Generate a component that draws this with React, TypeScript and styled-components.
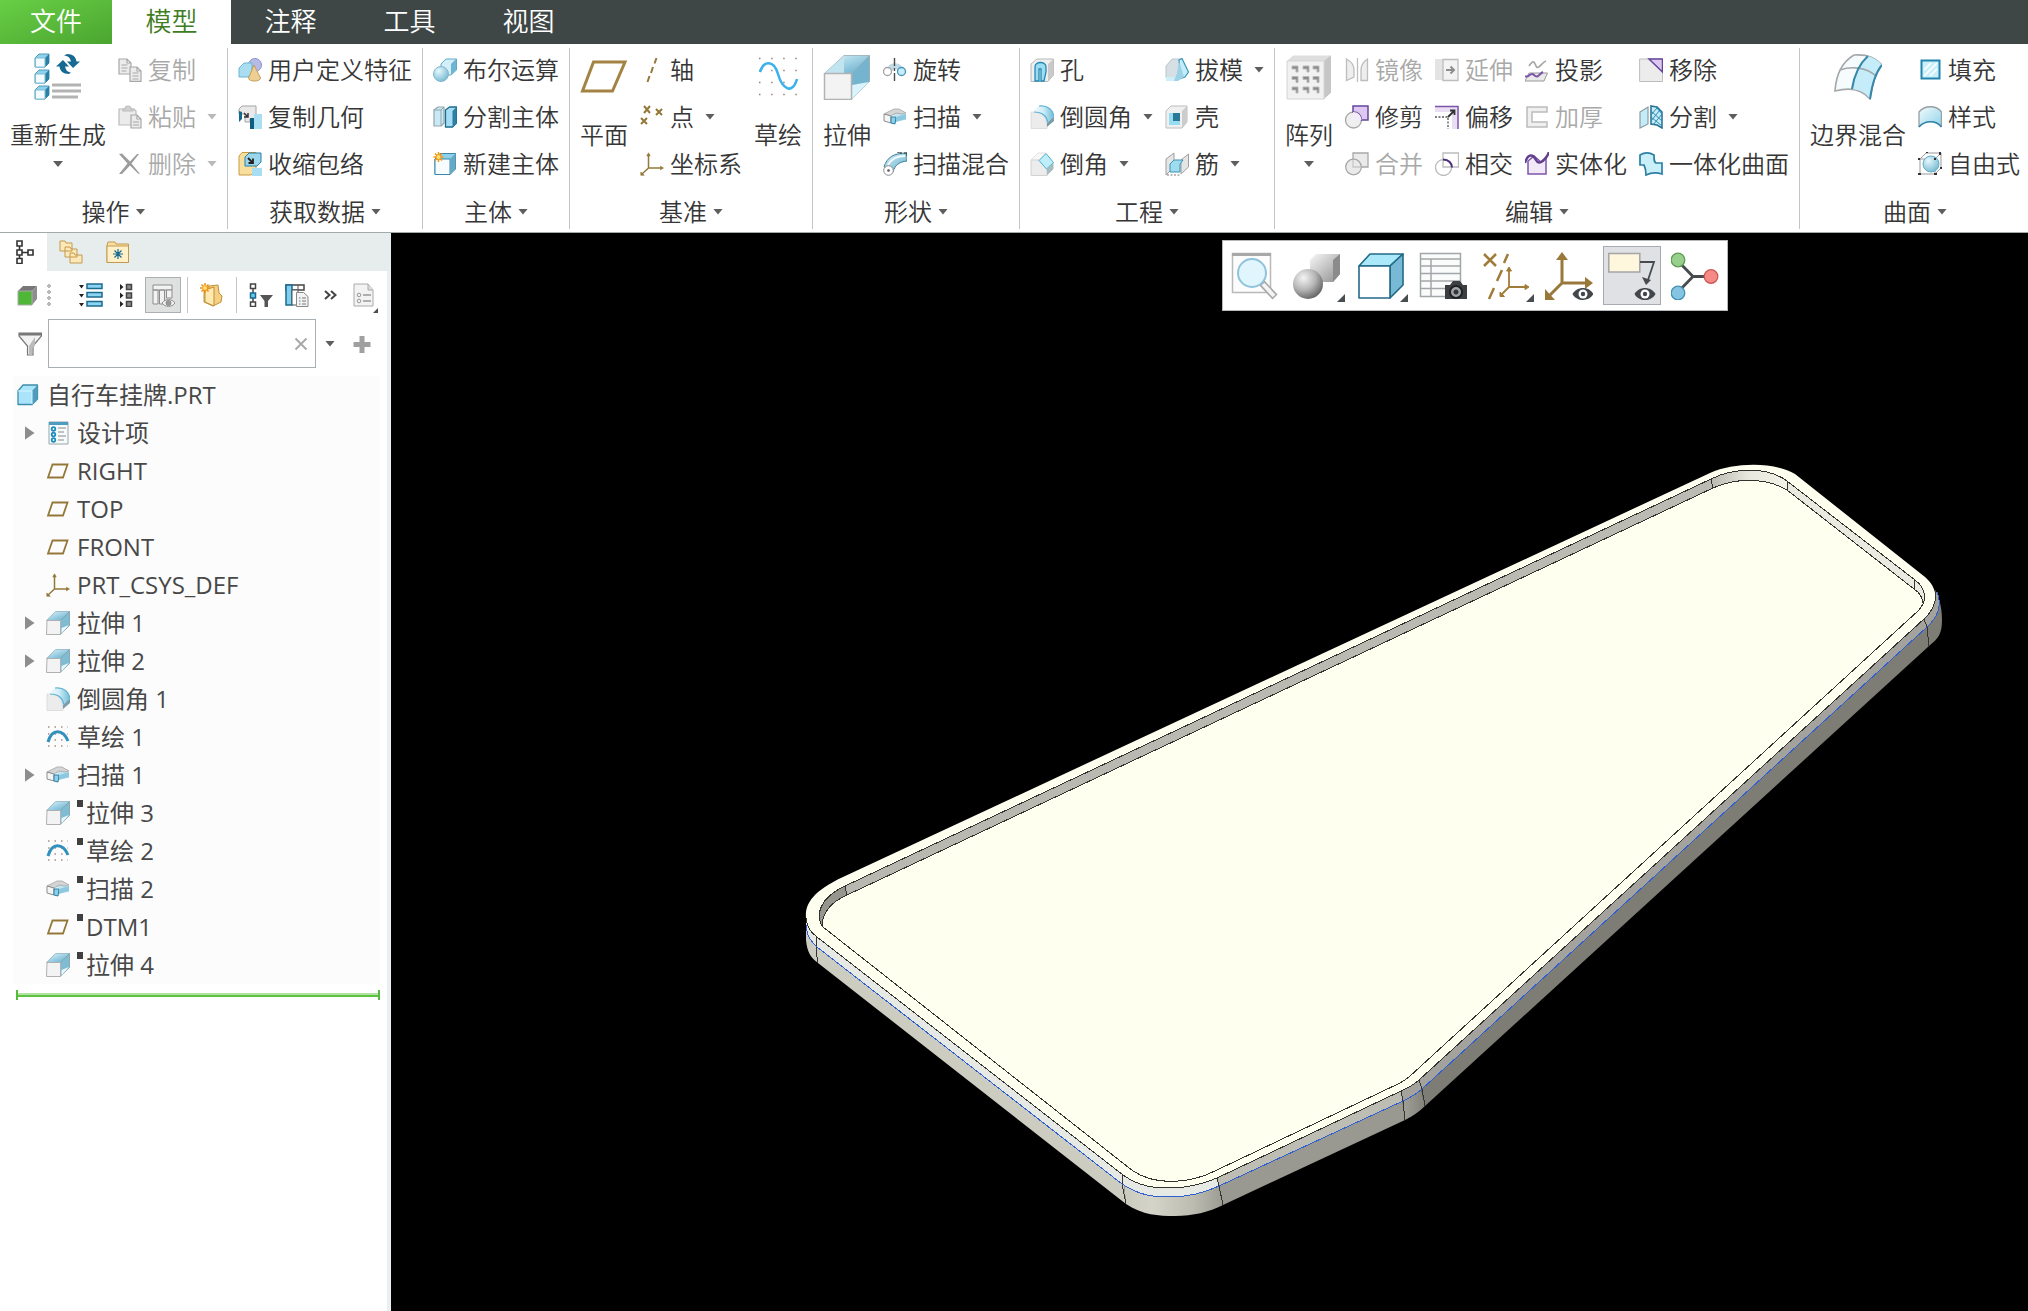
import React from "react";
import styled, { createGlobalStyle } from "styled-components";

const GlobalStyle = createGlobalStyle`
  *, *::before, *::after { box-sizing: border-box; }
  body {
    margin: 0;
    background: #000;
    color: #363636;
    font-family: "Open Sans", "Noto Sans CJK SC", sans-serif;
    font-size: 24px;
    font-weight: 350;
    line-height: 34px;
  }
  button, input {
    margin: 0;
    padding: 0;
    border: 0;
    background: transparent;
    color: inherit;
    font: inherit;
  }
  svg { display: block; flex: none; }
`;

/* ---------- palette ---------- */
const SKY = "#a9def2";
const TEAL = "#2a7fa3";
const GOLD = "#94783a";
const PURPLE = "#7d55a8";
const GREY = "#a8a8a8";

/* ---------- icons, 24 unit grid ---------- */
const extrude = (
  <g strokeLinejoin="round">
    <path d="M.5 9.500 9.500.5H23.500l-9 9z" fill="url(#blueDeep)" stroke="#8fb3c2" strokeWidth=".8" />
    <path d="M14.500 9.500l9-9v14l-9 9z" fill="#7fbbd3" stroke="#7f9ca8" strokeWidth=".8" />
    <path d="M15.500 17l7.500-3-7.500 8.500z" fill="#e8f8fd" />
    <path d="M1 9.500h13.500v14H.5z" fill="#f3f3f3" stroke="#b0b0b0" strokeWidth="1" />
  </g>
);
const csys = (
  <g stroke={GOLD} fill={GOLD} strokeWidth="1.500">
    <path d="M8.500 2v14H22M8.500 16 2 22" fill="none" />
    <path d="M6.800 4 8.500.8 10.200 4zM20.500 14.200l3 1.800-3 1.800zM.8 20v3.300h3.500z" strokeWidth=".6" />
  </g>
);
const round = (
  <g>
    <path d="M1 7h4C12 7 17 13 17 23.500H1z" fill="#ececec" stroke="#d8d8d8" strokeWidth=".8" />
    <path d="M9 1C18 0 23 5 24 13l-7 8C17 12 12 7 2 7z" fill="url(#band)" />
    <path d="M17 18l7-6v4l-7 6z" fill="#7e9ca8" />
    <path d="M9 1C18 0 23 5 24 12M4 7c8 0 13 4 13.500 10" fill="none" stroke="#5fb2d0" strokeWidth="1.200" />
  </g>
);
const sweep = (
  <g strokeLinejoin="round">
    <path d="M1 9 12 4l11 5v6l-9 1-1-5z" fill="#c2e4f0" />
    <path d="M1 9 11 4h5l7 4-4 1-6-1-5 3z" fill="#d5d5d5" stroke="#a5a5a5" strokeWidth=".8" />
    <path d="M1 9l7 2v7l-7-2z" fill="#f5f5f5" stroke="#8d8d8d" />
    <path d="M8 12h5l-1 7-4-1z" fill="#8fd0ea" stroke={TEAL} />
    <path d="M13 12l10-3v5l-10 3z" fill="#8cc9e0" />
  </g>
);

const ICONS: Record<string, React.ReactNode> = {
  extrude,
  csys,
  round,
  sweep,
  planeRow: <path d="M6.500 5.500h15L17 18.500H2z" fill="none" stroke={GOLD} strokeWidth="1.800" />,
  copy: (
    <g fill="#ececec" stroke={GREY} strokeWidth="1.200">
      <path d="M1 1h8l4 4v11H1zM9 1v4h4M3.500 7h6M3.500 10h6M3.500 13h5" />
      <path d="M12 9h7l4 4v10.400H12zM19 9v4h4M14.500 15h6M14.500 18h6M14.500 21h6" />
    </g>
  ),
  paste: (
    <g fill="#ebebeb" stroke="#bcbcbc" strokeWidth="1.200">
      <path d="M1 4h15l2 2v14H1z" />
      <path d="M5 6V4h2c0-4 6-4 6 0h2v2z" fill="#d0d0d0" />
      <path d="M13 10h6l4 4v9H13zM19 10v4h4M15 17h6M15 20h6" stroke={GREY} />
    </g>
  ),
  remove: <path d="M1 2l3-.5 8 8L19 2h2l-7.500 9.500L22 22l-2-.5-8-8L4 22H1l8.500-10.500z" fill="#9c9c9c" />,
  udf: (
    <g>
      <circle cx="17" cy="7" r="6.500" fill="#b6bbe6" stroke="#8d92c8" />
      <path d="M1 10l5-5h8v10l-4 4H1z" fill={SKY} stroke="#6db5d3" />
      <path d="M16 7l6.500 13c0 4-12 4-12 0z" fill="#edcf94" stroke="#c49c58" />
    </g>
  ),
  copyGeom: (
    <g>
      <path d="M1 4l3-3h14v13h-6v3H7V9H1z" fill="#e9e9e9" stroke="#a5a5a5" />
      <path d="M1 6v11l3-3V7z" fill="#156a8c" />
      <path d="M6 8l4 4m0-4v4H6" stroke="#333" strokeWidth="1.500" fill="none" />
      <path d="M12 13h4v11h-4z" fill="#0e5d80" />
      <path d="M16 9h8v15h-8z" fill={SKY} />
    </g>
  ),
  shrink: (
    <g>
      <path d="M1 4l3-3.500h14V18l-5 5H1z" fill="#f8df9d" stroke="#c99c44" />
      <path d="M7 5l4-4h12v9l-4 4H7z" fill="#9bd6ed" stroke={TEAL} />
      <path d="M10 6l5 5m0-4.500V11h-4.500" stroke="#222" strokeWidth="1.800" fill="none" />
      <path d="M14 16h10v8H14z" fill={SKY} />
    </g>
  ),
  boolean: (
    <g>
      <path d="M8 6l5-5h10.500v11L18 17H8z" fill="#d2effa" stroke="#5ea9c7" />
      <path d="M18 6l5-5v11l-5 5z" fill="#6db5d2" />
      <circle cx="8" cy="16" r="7.500" fill="url(#ball)" stroke="#83b7ca" />
    </g>
  ),
  splitBody: (
    <g strokeLinejoin="round">
      <path d="M1 5l4-3h6v16l-3 3H1z" fill="#c9eaf4" stroke="#93a5ac" strokeWidth="1.200" />
      <path d="M8 5v16M8 5l3-3M1 5h7" stroke="#93a5ac" />
      <path d="M12.500 5l4-3h7v16l-4 4h-7z" fill="#a5def4" stroke="#1d6b8d" strokeWidth="1.300" />
      <path d="M19.500 6l4-4v16l-4 4z" fill="#2d7fa3" />
    </g>
  ),
  newBody: (
    <g strokeLinejoin="round">
      <path d="M2 7l5-5.500h15.500V17L17 22.500H2z" fill="#8fd0ea" stroke="#3988aa" />
      <path d="M2 7h15v15.500H2z" fill="#f7fcfe" stroke="#3988aa" />
      <path d="M17 7l5.500-5.500V17L17 22.500z" fill="#66a9c5" />
      <path d="M5.500 0v10M.5 5h10M2 1.500l7 7M9 1.500l-7 7" stroke="#f09a1a" strokeWidth="1.500" />
      <circle cx="5.500" cy="5" r="2.500" fill="#ffe06a" stroke="#f09a1a" />
    </g>
  ),
  axis: <path d="M16.500 0l-2 5.500M13 9l-2 6M9.500 18l-2 6" stroke={GOLD} strokeWidth="2" />,
  points: (
    <path d="M4 1l6 7M10 1 4 8M16 4l6 6M22 4l-6 6M1 13l6 6M7 13l-6 6" stroke={GOLD} strokeWidth="2" />
  ),
  revolve: (
    <g>
      <path d="M5 9c2-5 12-5 14 0l-3 5-4-4-4 4z" fill="#c0dae5" />
      <circle cx="4.500" cy="13.500" r="4" fill="#fff" stroke="#a4a4a4" strokeWidth="1.300" />
      <circle cx="18.500" cy="13.500" r="4" fill="#c5edfa" stroke="#4696b7" strokeWidth="1.300" />
      <path d="M11.500 0v24" stroke="#4a4a4a" strokeWidth="1.400" strokeDasharray="8 2 3 2" />
    </g>
  ),
  sweepBlend: (
    <g>
      <path d="M1 15C4 5 11 1 24 1v8c-8 1-12 4-14 11z" fill="url(#blueDeep)" stroke="#3f809b" />
      <path d="M5 13C8 7 13 4 22 4" stroke="#f4fcff" strokeWidth="2" fill="none" />
      <circle cx="5.500" cy="18.500" r="4.800" fill="#fff" stroke="#8d8d8d" />
      <circle cx="5.500" cy="18.500" r="1.300" fill="#555" />
      <path d="M15 1V0h3v2M21 1h3v3" stroke="#333" fill="none" />
    </g>
  ),
  hole: (
    <g>
      <path d="M1 6l6-5h16.500v16L18 23.500H1z" fill="#efefef" stroke="#b8b8b8" />
      <path d="M18 6l5.500-5v16L18 23.500z" fill="#c9c9c9" />
      <path d="M5 23V9c0-6 11-6 11 0v5l-2 9h-3V11H9v12z" fill="#9ddcf2" stroke="#248ab2" strokeWidth="1.300" />
    </g>
  ),
  chamfer: (
    <g>
      <path d="M1 8l7-7h8L9 9z" fill="#f8f8f8" stroke="#dcdcdc" strokeWidth=".8" />
      <path d="M1 8h8l8 9v6.500H1z" fill="#ececec" stroke="#d2d2d2" />
      <path d="M17 17l6.500-6v6L17 23.500z" fill="#a9bac1" />
      <path d="M16 1.500l7.500 9-7 6.500-7.500-8.500z" fill="#bfeefb" stroke="#54adc9" />
    </g>
  ),
  draft: (
    <g>
      <path d="M1 8l6-7h9l-3 19H1z" fill="#d6e0e4" stroke="#b9c5ca" />
      <path d="M1 19h12v4H1z" fill="#cdeffa" />
      <path d="M14 2l3-1.500 6.500 13.500-3.500 5-4 1.500z" fill="#c3edfa" stroke="#3a93b4" strokeWidth="1.200" />
      <path d="M12 15l2-12 5 16-6 4H9z" fill="#9dd2e6" />
    </g>
  ),
  shell: (
    <g>
      <path d="M1 6l5-5h16v16l-5 6H1z" fill="#f0f0f0" stroke="#bdbdbd" />
      <path d="M17 6l5-5v16l-5 6z" fill="#cccccc" />
      <path d="M4 8h11v12H4z" fill="#98dcf2" />
      <path d="M8 8h7v8H8z" fill="#2b7796" />
    </g>
  ),
  rib: (
    <g>
      <path d="M1 7l8-6v14l-8 8zM16 8l7.500-6v13L16 22z" fill="#e5e5e5" stroke="#9f9f9f" />
      <path d="M5 12l4-4h9l-3 4v8H5z" fill="#9fdcf0" stroke="#3b93b5" />
      <path d="M2 23h14" stroke="#7a7a7a" strokeDasharray="2 1.500" />
    </g>
  ),
  mirror: (
    <g fill="#eeeeee" stroke="#bdbdbd" strokeWidth="1.300">
      <path d="M1.500 1C7 4 9 8 9 12v7l-7.500 3.500zM22.500 1C18 4 16 8 16 12v10.500h6.500zM12.500 0v24" />
    </g>
  ),
  extend: (
    <g>
      <path d="M0 1h8v21H0z" fill="#e4e4e4" />
      <path d="M8 1.500h15v21H8z" fill="#f3f3f3" stroke="#bdbdbd" strokeWidth="1.300" />
      <path d="M11 12h8m-3.500-3.500L19 12l-3.500 3.500" fill="none" stroke="#8d8d8d" strokeWidth="2" />
    </g>
  ),
  project: (
    <g fill="none">
      <path d="M4 8c4-6 5-5 7 0s6-4 10-5" stroke="#a7a7a7" strokeWidth="1.700" />
      <path d="M4 15h18.500l-3.500 8H0z" fill="#e9e9e9" stroke="#999" />
      <path d="M0 18c4 3 5-5 9-1s5-1 9-3" stroke={PURPLE} strokeWidth="2" />
    </g>
  ),
  trim: (
    <g>
      <circle cx="8.500" cy="15" r="8" fill="#efefef" stroke="#a8a8a8" strokeWidth="1.300" />
      <path d="M8 1h15v14h-6.500C16 10 13 7 8 7z" fill="#dcc8f0" stroke="#64469a" strokeWidth="1.500" />
      <path d="M8 7c5 0 8 3 8.500 8H8z" fill="#f3ecfa" />
    </g>
  ),
  offset: (
    <g>
      <path d="M0 1h23.500v23H17V7H0z" fill="#eadef5" />
      <path d="M0 1.500h23V24" fill="none" stroke={PURPLE} strokeWidth="1.500" />
      <path d="M0 12h13v12" fill="none" stroke="#555" strokeWidth="1.300" strokeDasharray="2 1.500" />
      <path d="M13 12l6-6m-4-.500h4.500V10" fill="none" stroke="#333" strokeWidth="1.800" />
    </g>
  ),
  thicken: <path d="M22 2H2v20h20v-5H7V7h15z" fill="#efefef" stroke="#bcbcbc" strokeWidth="1.500" />,
  merge: (
    <g fill="#eaeaea" stroke="#a8a8a8" strokeWidth="1.300">
      <path d="M8 1h15v14H8z" />
      <circle cx="8.500" cy="15" r="7.800" />
      <path d="M8 8v7h8" fill="none" stroke="#c8c8c8" />
    </g>
  ),
  intersect: (
    <g fill="none" stroke="#bcbcbc" strokeWidth="1.300">
      <path d="M8 1h15.500v14H8z" />
      <circle cx="8.500" cy="15.500" r="8" />
      <path d="M8 7.500c6 0 9 4 9 8" stroke="#4b2f78" strokeWidth="2" />
    </g>
  ),
  solidify: (
    <g>
      <path d="M3 9l6-5 7 6 5-5v17H3z" fill="#f1e9f8" stroke={PURPLE} strokeWidth="1.500" />
      <path d="M0 11C3 1 8 2 11 8s10 0 13-8" fill="none" stroke="#63408f" strokeWidth="2.500" />
    </g>
  ),
  removeSurf: (
    <g>
      <path d="M.6 1h23v22.500H.6z" fill="#ececec" stroke="#bdbdbd" />
      <path d="M10 1h13.500v13z" fill="#dcc8f0" stroke="#64469a" strokeWidth="1.500" />
    </g>
  ),
  splitSurf: (
    <g>
      <path d="M1 7l8-5v17l-8 4z" fill="#c3ecf8" stroke="#8e9da3" strokeWidth="1.200" />
      <path d="M12 1l6 1 5 5v16l-5-3-6-1z" fill="#c3ecf8" stroke="#256f8f" strokeWidth="1.500" />
      <path d="M12 6l11 10M12 12l11 9M16 1l7 8M12 16 21 5M14 20l9-11M12 10l6-7" stroke="#2f8cb5" />
    </g>
  ),
  unify: (
    <path
      d="M1 3c5-3 9-3 14 0 0 5 0 7 2 8h6v11c-6-2-10-2-16 1 0-5-1-8-2-10H1z"
      fill="#c9eff9"
      stroke="#2c7fa4"
      strokeWidth="1.700"
    />
  ),
  fill: (
    <g>
      <path d="M3.500 2.500h18v18h-18z" fill="#c9effb" stroke="#2384ae" strokeWidth="2" />
      <path d="M6 12l7-7M6 18 19 5M12 18l7-7" stroke="#fff" strokeWidth="1.500" />
    </g>
  ),
  style: (
    <g>
      <path d="M1 7c6-7 17-7 22.500 0v15C18 15 7 15 1 22z" fill="url(#blueSoft)" />
      <path d="M1 22V7c6-7 17-7 22.500 0v15" fill="none" stroke="#969fa3" strokeWidth="1.300" />
      <path d="M1 22C7 15 18 15 23.500 22" fill="none" stroke={TEAL} strokeWidth="1.500" />
    </g>
  ),
  freeform: (
    <g>
      <path d="M2 7l6-6h15v15l-6 6H2zM2 7h15v15M17 7l6-6" fill="none" stroke="#9b9b9b" />
      <circle cx="13" cy="12" r="8" fill="url(#ball)" stroke="#66aec8" />
      <path d="M0 22h3M0 7h2M22 0v3M8 0h2M22 16h2M16 22h3M16 7h2" stroke="#333" strokeWidth="2" />
    </g>
  ),
  /* model tree */
  part: (
    <g strokeLinejoin="round">
      <path d="M2 8l5-6h14.500v14L16 21.500H2z" fill="#a9e4fa" stroke="#3e8cab" strokeWidth="1.300" />
      <path d="M16 8l5.500-6v14L16 21.500z" fill="#4d9dbf" />
      <path d="M2 8h14v13" fill="none" stroke="#d8f5ff" />
    </g>
  ),
  design: (
    <g>
      <path d="M3 1h19v22H3z" fill="#f8fbfc" stroke="#9aa5aa" />
      <path d="M3 1h19v3H3z" fill="#4c9cc0" />
      <g fill="none" stroke="#1d8dbd" strokeWidth="1.800">
        <circle cx="7.500" cy="8" r="1.800" />
        <circle cx="7.500" cy="13.500" r="1.800" />
        <circle cx="7.500" cy="19" r="1.800" />
      </g>
      <path d="M12 7h8M12 11h6M12 15h8M12 19h6" stroke="#888" />
    </g>
  ),
  sketchSmall: (
    <g>
      <path d="M2 2h20M2 9h20M2 15h20M2 21h20" stroke="#a28f87" strokeWidth="1.500" strokeDasharray="1.500 5" />
      <path d="M2 17C6 3 17 4 22 16" fill="none" stroke="#3290bd" strokeWidth="3" />
    </g>
  ),
  treeTab: (
    <g fill="none" stroke="#333" strokeWidth="1.600">
      <path d="M5 1h5v5H5zM5 10h5v5H5zM5 18.500h5v5H5zM16 10h5v5h-5zM7.500 6v4M7.500 15v3.500M10 12.500h6" />
    </g>
  ),
  folders: (
    <g fill="#fde9b8" stroke="#c19a50">
      <path d="M1 1h5l1 2h6v8H1zM6 7h5l1 2h6v8H6zM11 13h4l1 2h7v8H11z" />
    </g>
  ),
  favorites: (
    <g>
      <path d="M1 5l1-3h7l1 2h12.500v18.500H1z" fill="#fcdfa0" stroke="#c19a50" />
      <path d="M1 6h21.500v16.500H1z" fill="#fff0c8" stroke="#c19a50" />
      <path d="M12 9v10M7 14h10M8.500 10.500l7 7M15.500 10.500l-7 7" stroke="#176a92" strokeWidth="1.200" />
    </g>
  ),
  greenCube: (
    <g>
      <path d="M2 8l5-5h14l-5 5z" fill="#777" />
      <path d="M16 8l5-5v13l-5 6z" fill="#8e8e8e" />
      <path d="M2 8h14v14H2z" fill="#4fb737" stroke="#a9a9a9" />
    </g>
  ),
  expandList: (
    <g>
      <path d="M0 2h5L2.500 5.500zM0 11h5l-2.500 3.500zM0 20h5l-2.500 3.500z" fill="#222" />
      <path d="M8 1h15v4.500H8zM8 9.500h15V14H8zM8 18.500h15V23H8z" fill="#8bd5f2" stroke="#1c6a8d" strokeWidth="1.500" />
    </g>
  ),
  collapseList: (
    <g>
      <path d="M5 1l3.500 3L5 7zM5 9.500l3.500 3-3.500 3zM5 18l3.500 3L5 24z" fill="#222" />
      <path d="M11.500 1.500h5v5h-5zM11.500 10h5v5h-5zM11.500 18.500h5v5h-5z" fill="#8b8b8b" stroke="#444" strokeWidth="1.500" />
    </g>
  ),
  columns: (
    <g fill="#f2f2f2" stroke="#8d8d8d">
      <path d="M2 2h19v5H2zM2 7h5v14H2zM8.500 7h5v14h-5z" />
      <path d="M15.500 7H21v8h-5.500z" />
      <path d="M11 20c3-4.500 10-4.500 13 0-3 4.500-10 4.500-13 0z" />
      <circle cx="17.500" cy="20" r="2.500" fill="#999" />
    </g>
  ),
  newFolder: (
    <g>
      <path d="M9 3l9-1 1 8 3 3-1 6-8 4-9-4V6z" fill="#f5cf82" stroke="#be9238" />
      <path d="M5 7l9-3v19l-9-4z" fill="#ffe9b0" stroke="#be9238" />
      <path d="M5 0v10M0 5h10M1.500 1.500l7 7M8.500 1.500l-7 7" stroke="#ee8d10" strokeWidth="1.500" />
      <circle cx="5" cy="5" r="2" fill="#ffe06a" />
    </g>
  ),
  treeFilter: (
    <g>
      <path d="M1.500 1h5v4.500h-5zM1.500 19h5v4.500h-5zM4 5.500v13.500" fill="#fff" stroke="#444" strokeWidth="1.500" />
      <path d="M1.500 10h5v5h-5z" fill="#6cc6ea" stroke="#176a92" strokeWidth="1.500" />
      <path d="M11 12h13l-5 6v6h-3.500v-6z" fill="#555" />
    </g>
  ),
  columnDoc: (
    <g>
      <path d="M1 2h18v5H1z" fill="#fff" stroke="#444" strokeWidth="1.500" />
      <path d="M1 2h6v20H1z" fill="#7fd0f0" stroke="#1c6a8d" strokeWidth="1.500" />
      <path d="M7 7h6v15H7zM13 2v5" fill="#fff" stroke="#555" />
      <path d="M11.500 9.500h7l4.500 4v10H11.500z" fill="#f3f3f3" stroke="#888" />
      <path d="M14 15h7M14 18h7M14 21h7" stroke="#777" strokeDasharray="1.500 1.500 6" />
    </g>
  ),
  document: (
    <g>
      <path d="M1 1h14l5 6v16H1z" fill="#f3f3f3" stroke="#aaa" />
      <path d="M15 1v6h5" fill="#ddd" stroke="#aaa" />
      <g fill="none" stroke="#999">
        <circle cx="6" cy="12" r="1.800" />
        <circle cx="6" cy="18" r="1.800" />
        <path d="M10 12h8M10 18h8" strokeWidth="1.500" />
      </g>
    </g>
  ),
  funnel: (
    <g>
      <path d="M1 1h22.500v3L15 14v9H9.500v-9L1 4z" fill="#f2f2f2" stroke="#777" strokeWidth="1.200" />
      <path d="M1 1h22.500v2.500H1z" fill="#777" />
      <path d="M11 14l6-9v9l-3 2v7h-3z" fill="#bbb" />
    </g>
  ),
  add: <path d="M9.500 4h5v6h6v5h-6v6h-5v-6h-6v-5h6z" fill="#a0a0a0" />,
  clear: <path d="M6.500 6.500l11 11M17.500 6.500l-11 11" stroke="#a9a9a9" strokeWidth="2" />,
};

/* ---------- icons, 48 unit grid ---------- */
const eye = (cx: number, cy: number) => (
  <g transform={`translate(${cx} ${cy})`}>
    <path d="M-10.500 0C-6-8 6-8 10.500 0 6 8-6 8-10.500 0z" fill="#41474a" />
    <circle r="4.500" fill="#fff" />
    <circle r="2.200" fill="#41474a" />
  </g>
);
const smallCube = (y: number) => (
  <g key={y}>
    <path d={`M1 ${y + 4}l4-4h10v9l-4 4H1z`} fill="#8fd0ea" stroke="#4d9cbc" />
    <path d={`M11 ${y + 4}l4-4v9l-4 4z`} fill="#2a80a5" />
    <path d={`M1.500 ${y + 4}h9.500v9H1.500z`} fill="#f2fbfe" stroke="#7fbcd3" />
  </g>
);

const BIG: Record<string, React.ReactNode> = {
  regenerate: (
    <g>
      {[2, 18, 34].map(smallCube)}
      <path d="M33 2c6 0 9 3 9.500 7.500H46L39 16l-6-6.500h4C36 6 35 4 30 3.500z" fill="#176a92" />
      <path d="M35 22c-6 0-9-3-9.500-7.500H22L29 8l6 6.500h-4C32 18 33 20 37 20.500z" fill="#176a92" />
      <path d="M18 33h29M18 39h29M18 45h26" stroke="#b3b3b3" strokeWidth="3" />
    </g>
  ),
  planeBig: <path d="M13.500 10H45L32.500 39H2.500z" fill="none" stroke="#a38343" strokeWidth="3" />,
  sketch: (
    <g>
      <path d="M5 6.500h39M5 18.500h39M5 30.500h39M5 42.500h39" stroke="#9c8078" strokeWidth="1.500" strokeDasharray="1.500 10.600" />
      <path d="M6 20C10 8 20 8 24 22s14 22 19 5" fill="none" stroke="#3cb2ec" strokeWidth="2.600" />
    </g>
  ),
  extrudeBig: (
    <g strokeLinejoin="round">
      <path d="M1.500 21.500 21 3.500h25.500l-18 18z" fill="url(#blueDeep)" stroke="#a6b9c0" />
      <path d="M21 4v17H2z" fill="#c0e4f0" />
      <path d="M28.500 21.500l18-18v26l-18 18z" fill="#75b4ce" stroke="#9db0b8" />
      <path d="M29 33l17-3-17 17z" fill="#d9f4fc" />
      <path d="M1.500 21.500h27v26h-27z" fill="#f3f3f3" stroke="#b2b2b2" strokeWidth="1.500" />
    </g>
  ),
  pattern: (
    <g>
      <path d="M2 9l6-5.500h38v37L39 47H2z" fill="#dedede" />
      <path d="M39 9l7-5.500v37L39 47z" fill="#c6c6c6" />
      <path d="M2 9h37v38H2z" fill="#f1f1f1" stroke="#d4d4d4" />
      {[14, 24.5, 35].map((y) => (
        <path key={y} d={`M7 ${y}h6v6h-2v-3H7zM18 ${y}h6v6h-2v-3h-4zM28 ${y}h6v6h-2v-3h-4z`} fill="#8a8a8a" stroke="#b9b9b9" />
      ))}
    </g>
  ),
  boundary: (
    <g fill="none">
      <path d="M20 3c12-1 22 3 28 10-7 8-10 20-12 34C28 37 16 35 1 39 2 24 8 10 20 3z" fill="#f6fbfd" stroke="#a4a8aa" strokeWidth="1.600" />
      <path d="M34 4c6 2 11 5 14 9-7 8-10 20-12 34-4-6-9-9-18-10C20 24 24 13 34 4z" fill="#c4ecf9" />
      <path d="M6 18c11-4 26-3 36 6" stroke="#a4a8aa" strokeWidth="1.600" />
      <path d="M34 4C24 13 20 24 18 37M48 13c-7 8-10 20-12 34" stroke="#3886a8" strokeWidth="2" />
    </g>
  ),
  zoomFit: (
    <g>
      <path d="M2.500 1.500h38v39h-38z" fill="#fcfcfc" stroke="#b9b9b9" strokeWidth="1.500" />
      <path d="M2 1h39v3H2z" fill="#a8a8a8" />
      <path d="M32 31l13 14" stroke="#a6a6a6" strokeWidth="7" />
      <path d="M33 32l11 12" stroke="#f4f4f4" strokeWidth="4" />
      <circle cx="22" cy="21" r="14" fill="#e0f5fc" stroke="#8fc3dc" strokeWidth="2" />
    </g>
  ),
  shading: (
    <g>
      <path d="M17 8l6-6h24v20l-7 8H17z" fill="url(#greyBox)" />
      <path d="M40 8l7-6v20l-7 8z" fill="#8b8b8b" />
      <circle cx="15" cy="32" r="15" fill="url(#greyBall)" />
    </g>
  ),
  boxView: (
    <g stroke="#236a88" strokeWidth="1.600" strokeLinejoin="round">
      <path d="M3 14 14 2h33L34 14z" fill="#aae8fa" />
      <path d="M34 14 47 2v31L34 46z" fill="#78bad6" />
      <path d="M3 14h31v32H3z" fill="#fff" />
    </g>
  ),
  savedViews: (
    <g>
      <path d="M1.500 1.500h40v43h-40zM1 7h41M1 14h41M1 21.500h41M1 29h41M1 36.500h41M12 7v38" fill="#fafcfc" stroke="#a2a6a8" strokeWidth="1.500" />
      <path d="M26 33h5l3-4h7l3 4h4v14H26z" fill="#3c3f42" />
      <circle cx="37" cy="40" r="6" fill="#a2a5a8" stroke="#1e2022" strokeWidth="2" />
      <circle cx="37" cy="40" r="2.500" fill="#33363a" />
    </g>
  ),
  datums: (
    <g stroke="#a07c38" strokeWidth="2.500" fill="none">
      <path d="M2 2l12 12M14 2 2 14M26 2l-4 9M20 18l-5 11M12 36 7 47" />
      <path d="M27 16v19h18M27 35l-8 8" strokeWidth="1.800" />
      <path d="M24.500 19l2.500-4 2.500 4zM43 32.500l4 2.500-4 2.500zM18 40v4.500h4.500z" fill="#a07c38" strokeWidth="1" />
    </g>
  ),
  csysView: (
    <g>
      <path d="M17 5v26h26M17 31 4 44" stroke="#98793a" strokeWidth="3" fill="none" />
      <path d="M11 8l6-8 6 8zM40 25l8 6-8 6zM0 37v11h10z" fill="#98793a" />
      {eye(38, 42)}
    </g>
  ),
  annotations: (
    <g>
      <path d="M.8 1.500h31V20H.8z" fill="#fff6de" stroke="#a5a5a5" strokeWidth="1.500" />
      <path d="M32 10h14l-6 18" fill="none" stroke="#454b4e" strokeWidth="1.800" />
      <path d="M34 25l9 3-5 5z" fill="#454b4e" />
      {eye(37, 42)}
    </g>
  ),
  spin: (
    <g>
      <path d="M6 8l16 16.500h17M6 41l16-16.500" fill="none" stroke="#454b4e" strokeWidth="2.800" />
      <circle cx="7" cy="8" r="6.800" fill="#97cf8c" stroke="#5f9c55" strokeWidth="1.300" />
      <circle cx="40" cy="24.500" r="6.800" fill="#f58a86" stroke="#cc5752" strokeWidth="1.300" />
      <circle cx="7" cy="41" r="6.800" fill="#85c5e2" stroke="#4391b4" strokeWidth="1.300" />
    </g>
  ),
};

const HiddenSvg = styled.svg`
  position: absolute;
  width: 0;
  height: 0;
`;
const SharedGradients = () => (
  <HiddenSvg aria-hidden="true">
    <defs>
      <linearGradient id="blueDeep" x1="0" y1="0" x2="1" y2="1">
        <stop offset="0" stopColor="#e0f5fb" />
        <stop offset="1" stopColor="#5aa9c9" />
      </linearGradient>
      <linearGradient id="band" x1="0" y1="0" x2="1" y2="0">
        <stop offset="0" stopColor="#f6fafb" />
        <stop offset=".5" stopColor="#d2eef8" />
        <stop offset="1" stopColor="#6cbcd9" />
      </linearGradient>
      <linearGradient id="blueSoft" x1="0" y1="0" x2="1" y2="1">
        <stop offset="0" stopColor="#f4fbfd" />
        <stop offset="1" stopColor="#8ed3ea" />
      </linearGradient>
      <radialGradient id="ball" cx=".35" cy=".3" r=".8">
        <stop offset="0" stopColor="#e6f8fd" />
        <stop offset="1" stopColor="#6fb6d0" />
      </radialGradient>
      <radialGradient id="greyBall" cx=".35" cy=".3" r=".8">
        <stop offset="0" stopColor="#f4f4f4" />
        <stop offset=".5" stopColor="#b5b5b5" />
        <stop offset="1" stopColor="#555" />
      </radialGradient>
      <linearGradient id="greyBox" x1="0" y1="0" x2="1" y2="1">
        <stop offset="0" stopColor="#f8f8f8" />
        <stop offset="1" stopColor="#8f8f8f" />
      </linearGradient>
    </defs>
  </HiddenSvg>
);

const Icon = ({ name }: { name: string }) => (
  <svg width="24" height="24" viewBox="0 0 24 24" aria-hidden="true">{ICONS[name]}</svg>
);
const BigIcon = ({ name }: { name: string }) => (
  <svg width="48" height="48" viewBox="0 0 48 48" aria-hidden="true">{BIG[name]}</svg>
);

/* ---------- layout ---------- */
const Page = styled.div`
  display: flex;
  flex-direction: column;
  min-height: 100vh;
  overflow: hidden;
  white-space: nowrap;
`;

const TabBar = styled.nav`
  display: flex;
  height: 44px;
  background: #3e4746;
`;
const TabButton = styled.button<{ $kind?: "file" | "active" }>`
  width: ${(p) => (p.$kind === "file" ? 112 : 119)}px;
  padding-bottom: 2px;
  font-size: 26px;
  color: ${(p) => (p.$kind === "active" ? "#3f7d23" : "#fff")};
  background: ${(p) =>
    p.$kind === "file"
      ? "linear-gradient(160deg, #68cf45, #4ba530)"
      : p.$kind === "active"
      ? "#fff"
      : "transparent"};
`;

const Ribbon = styled.header`
  display: flex;
  height: 189px;
  overflow: hidden;
  background: #fff;
  border-bottom: 1px solid #a3aaaa;
`;
const GroupBox = styled.section`
  display: flex;
  flex: none;
  flex-direction: column;
  padding: 2px 10px 0;
`;
const Separator = styled.i`
  flex: 0 0 1px;
  margin: 4px 0 3px;
  background: #c2c5c5;
`;
const Tools = styled.div`
  display: flex;
  gap: 12px;
  height: 141px;
`;
const ToolColumn = styled.div`
  display: flex;
  flex-direction: column;
  align-items: flex-start;
`;
const Tool = styled.button`
  display: flex;
  align-items: center;
  gap: 6px;
  height: 47px;
  &:disabled { color: #a9a9a9; }
`;
const Caret = styled.i<{ $apart?: boolean }>`
  width: 10px;
  height: 6px;
  margin-left: ${(p) => (p.$apart ? 5 : 0)}px;
  background: currentColor;
  opacity: 0.8;
  clip-path: polygon(0 0, 100% 0, 50% 100%);
`;
const BigTool = styled.button`
  display: flex;
  flex-direction: column;
  align-items: center;
  align-self: flex-start;
  gap: 9px;
  padding-top: 6px;
`;
const BigLabel = styled.span`
  padding-top: 9px;
`;
const GroupLabel = styled.button`
  display: flex;
  align-items: center;
  justify-content: center;
  gap: 6px;
  height: 44px;
  padding-top: 5px;
`;

type ToolDef = { icon: string; label: string; menu?: boolean; off?: boolean };
type Part = { big: string; label: string; menu?: boolean } | ToolDef[];
type Group = { name: string; parts: Part[] };

const t = (icon: string, label: string, flags = ""): ToolDef => ({
  icon,
  label,
  menu: flags.includes("m"),
  off: flags.includes("d"),
});

const GROUPS: Group[] = [
  {
    name: "操作",
    parts: [
      { big: "regenerate", label: "重新生成", menu: true },
      [t("copy", "复制", "d"), t("paste", "粘贴", "md"), t("remove", "删除", "md")],
    ],
  },
  { name: "获取数据", parts: [[t("udf", "用户定义特征"), t("copyGeom", "复制几何"), t("shrink", "收缩包络")]] },
  { name: "主体", parts: [[t("boolean", "布尔运算"), t("splitBody", "分割主体"), t("newBody", "新建主体")]] },
  {
    name: "基准",
    parts: [
      { big: "planeBig", label: "平面" },
      [t("axis", "轴"), t("points", "点", "m"), t("csys", "坐标系")],
      { big: "sketch", label: "草绘" },
    ],
  },
  {
    name: "形状",
    parts: [
      { big: "extrudeBig", label: "拉伸" },
      [t("revolve", "旋转"), t("sweep", "扫描", "m"), t("sweepBlend", "扫描混合")],
    ],
  },
  {
    name: "工程",
    parts: [
      [t("hole", "孔"), t("round", "倒圆角", "m"), t("chamfer", "倒角", "m")],
      [t("draft", "拔模", "m"), t("shell", "壳"), t("rib", "筋", "m")],
    ],
  },
  {
    name: "编辑",
    parts: [
      { big: "pattern", label: "阵列", menu: true },
      [t("mirror", "镜像", "d"), t("trim", "修剪"), t("merge", "合并", "d")],
      [t("extend", "延伸", "d"), t("offset", "偏移"), t("intersect", "相交")],
      [t("project", "投影"), t("thicken", "加厚", "d"), t("solidify", "实体化")],
      [t("removeSurf", "移除"), t("splitSurf", "分割", "m"), t("unify", "一体化曲面")],
    ],
  },
  {
    name: "曲面",
    parts: [
      { big: "boundary", label: "边界混合" },
      [t("fill", "填充"), t("style", "样式"), t("freeform", "自由式")],
    ],
  },
];

const RibbonGroup = ({ group }: { group: Group }) => (
  <>
    <GroupBox aria-label={group.name}>
      <Tools>
        {group.parts.map((part, i) =>
          Array.isArray(part) ? (
            <ToolColumn key={i}>
              {part.map((tool) => (
                <Tool key={tool.label} disabled={tool.off}>
                  <Icon name={tool.icon} />
                  <span>{tool.label}</span>
                  {tool.menu && <Caret $apart />}
                </Tool>
              ))}
            </ToolColumn>
          ) : (
            <BigTool key={i}>
              <BigIcon name={part.big} />
              <BigLabel>{part.label}</BigLabel>
              {part.menu && <Caret />}
            </BigTool>
          )
        )}
      </Tools>
      <GroupLabel>
        <span>{group.name}</span>
        <Caret />
      </GroupLabel>
    </GroupBox>
    <Separator />
  </>
);

/* ---------- side panel ---------- */
const Main = styled.main`
  display: flex;
  flex: 1;
`;
const SidePanel = styled.aside`
  flex: 0 0 391px;
  min-width: 0;
  background: #fff;
  border-right: 4px solid #e9f0f1;
`;
const PanelTabs = styled.div`
  display: flex;
  height: 38px;
  margin-right: -4px;
  background: #e7ecec;
`;
const PanelTab = styled.button<{ $active?: boolean }>`
  display: grid;
  place-items: center;
  width: 47px;
  background: ${(p) => (p.$active ? "#fff" : "transparent")};
`;
const PanelTools = styled.div`
  display: flex;
  height: 42px;
  padding: 6px 0 0 10px;
`;
const PanelTool = styled.button<{ $pressed?: boolean; $narrow?: boolean; $apart?: boolean }>`
  position: relative;
  display: grid;
  flex: none;
  place-items: center;
  width: ${(p) => (p.$narrow ? 32 : 36)}px;
  height: 36px;
  margin-left: ${(p) => (p.$apart ? 21 : 0)}px;
  border: ${(p) => (p.$pressed ? "1px solid #adb0b0" : "0")};
  background: ${(p) => (p.$pressed ? "#dfe0e0" : "transparent")};
`;
const Grip = styled.i`
  width: 6px;
  height: 24px;
  margin-top: 6px;
  background: radial-gradient(circle, #b9b9b9 2px, transparent 2px) 0 0 / 6px 6px;
`;
const ToolDivider = styled.i`
  flex: none;
  width: 1px;
  margin: 0 6px;
  background: #c4c6c6;
`;
const Corner = styled.i<{ $size: number }>`
  position: absolute;
  right: ${(p) => (p.$size === 8 ? 1 : 5)}px;
  bottom: ${(p) => (p.$size === 8 ? 3 : 0)}px;
  width: ${(p) => p.$size}px;
  height: ${(p) => p.$size}px;
  background: #484e50;
  clip-path: polygon(100% 0, 100% 100%, 0 100%);
`;
const FilterRow = styled.form`
  display: flex;
  align-items: center;
  padding: 6px 7px 8px 18px;
`;
const FilterField = styled.label`
  display: flex;
  flex: 1;
  align-items: center;
  min-width: 0;
  height: 49px;
  margin-left: 6px;
  padding-right: 2px;
  border: 1px solid #a9b0b3;
`;
const FilterInput = styled.input`
  flex: 1;
  width: 100%;
  min-width: 0;
  padding: 0 8px;
  outline: 0;
`;
const FilterButton = styled.button<{ $w: number }>`
  display: grid;
  flex: none;
  place-items: center;
  width: ${(p) => p.$w}px;
  height: 36px;
`;

const Tree = styled.ul`
  margin: 0 7px 0 13px;
  padding: 0;
  list-style: none;
  font-weight: 400;
  color: #484848;
  background: #fcfcfc;
`;
const TreeRow = styled.li<{ $root?: boolean }>`
  display: flex;
  align-items: center;
  gap: 7px;
  height: 38px;
  padding-left: ${(p) => (p.$root ? 3 : 33)}px;
`;
const Expander = styled.button`
  display: grid;
  place-items: center;
  width: 33px;
  height: 38px;
  margin: 0 -7px 0 -33px;
`;
const RightArrow = styled.i`
  width: 10px;
  height: 14px;
  background: #8d8d8d;
  clip-path: polygon(0 0, 100% 50%, 0 100%);
`;
const ItemName = styled.span<{ $marked?: boolean }>`
  display: flex;
  gap: 3px;
  &::before {
    content: ${(p) => (p.$marked ? '""' : "none")};
    width: 6px;
    height: 7px;
    margin-top: 4px;
    background: #404040;
  }
`;
const InsertBar = styled.div`
  display: flex;
  align-items: center;
  height: 10px;
  margin: 6px 7px 0 16px;
  border: solid #55bb3c;
  border-width: 0 2px;
  &::before {
    content: "";
    flex: 1;
    height: 4px;
    background: linear-gradient(#b4e2a5 50%, #5cc440 50%);
  }
`;

type Item = { icon: string; name: string; open?: boolean; marked?: boolean };
const ITEMS: Item[] = [
  { icon: "design", name: "设计项", open: true },
  { icon: "planeRow", name: "RIGHT" },
  { icon: "planeRow", name: "TOP" },
  { icon: "planeRow", name: "FRONT" },
  { icon: "csys", name: "PRT_CSYS_DEF" },
  { icon: "extrude", name: "拉伸 1", open: true },
  { icon: "extrude", name: "拉伸 2", open: true },
  { icon: "round", name: "倒圆角 1" },
  { icon: "sketchSmall", name: "草绘 1" },
  { icon: "sweep", name: "扫描 1", open: true },
  { icon: "extrude", name: "拉伸 3", marked: true },
  { icon: "sketchSmall", name: "草绘 2", marked: true },
  { icon: "sweep", name: "扫描 2", marked: true },
  { icon: "planeRow", name: "DTM1", marked: true },
  { icon: "extrude", name: "拉伸 4", marked: true },
];

const ModelTree = () => (
  <SidePanel>
    <PanelTabs>
      <PanelTab $active aria-label="模型树"><Icon name="treeTab" /></PanelTab>
      <PanelTab aria-label="文件夹浏览器"><Icon name="folders" /></PanelTab>
      <PanelTab aria-label="收藏夹"><Icon name="favorites" /></PanelTab>
    </PanelTabs>
    <PanelTools>
      <PanelTool aria-label="模型"><Icon name="greenCube" /></PanelTool>
      <Grip />
      <PanelTool $apart aria-label="全部展开"><Icon name="expandList" /></PanelTool>
      <PanelTool aria-label="全部折叠"><Icon name="collapseList" /></PanelTool>
      <PanelTool $pressed aria-label="显示列"><Icon name="columns" /></PanelTool>
      <ToolDivider />
      <PanelTool aria-label="新建组"><Icon name="newFolder" /></PanelTool>
      <ToolDivider />
      <PanelTool aria-label="树过滤器"><Icon name="treeFilter" /></PanelTool>
      <PanelTool aria-label="树列"><Icon name="columnDoc" /></PanelTool>
      <PanelTool $narrow aria-label="更多">
        <svg width="14" height="12" viewBox="0 0 14 12">
          <path d="M1 2l4.500 4L1 10M7 2l4.500 4L7 10" fill="none" stroke="#444" strokeWidth="2" />
        </svg>
      </PanelTool>
      <PanelTool aria-label="树设置"><Icon name="document" /><Corner $size={5} /></PanelTool>
    </PanelTools>
    <FilterRow>
      <Icon name="funnel" />
      <FilterField>
        <FilterInput type="text" aria-label="过滤" />
        <FilterButton type="button" $w={24} aria-label="清除"><Icon name="clear" /></FilterButton>
      </FilterField>
      <FilterButton type="button" $w={28} aria-label="过滤选项"><Caret /></FilterButton>
      <FilterButton type="button" $w={36} aria-label="添加"><Icon name="add" /></FilterButton>
    </FilterRow>
    <Tree>
      <TreeRow $root>
        <Icon name="part" />
        <ItemName>自行车挂牌.PRT</ItemName>
      </TreeRow>
      {ITEMS.map((item) => (
        <TreeRow key={item.name}>
          {item.open && <Expander aria-label={"展开 " + item.name}><RightArrow /></Expander>}
          <Icon name={item.icon} />
          <ItemName $marked={item.marked}>{item.name}</ItemName>
        </TreeRow>
      ))}
    </Tree>
    <InsertBar />
  </SidePanel>
);

/* ---------- graphics window ---------- */
const Viewport = styled.section`
  position: relative;
  display: flex;
  flex: 1;
  min-width: 0;
  background: #000;
`;
const Scene = styled.svg`
  flex: 1;
  width: 100%;
  min-width: 0;
`;
const ViewBar = styled.div`
  position: absolute;
  top: 7px;
  right: 300px;
  display: flex;
  gap: 5px;
  padding: 5px 3px 5px 2px;
  background: #fff;
  border: 1px solid #b5b9bc;
`;
const ViewButton = styled.button<{ $pressed?: boolean }>`
  position: relative;
  display: grid;
  place-items: center;
  width: 58px;
  height: 59px;
  background: ${(p) => (p.$pressed ? "#dfe1e5" : "transparent")};
  box-shadow: ${(p) => (p.$pressed ? "inset 0 0 0 1px #a8acb2" : "none")};
`;

const VIEWS = [
  { icon: "zoomFit", label: "重新调整" },
  { icon: "shading", label: "渲染选项", menu: true },
  { icon: "boxView", label: "显示样式", menu: true },
  { icon: "savedViews", label: "已保存方向" },
  { icon: "datums", label: "基准显示过滤器", menu: true },
  { icon: "csysView", label: "坐标系显示" },
  { icon: "annotations", label: "注释显示", pressed: true },
  { icon: "spin", label: "旋转中心" },
];

const RIM_FRONT =
  "M806 918C807 928 811 932 817 937L1123 1175C1140 1187 1155 1188 1170 1188C1188 1188 1203 1184 1217 1178L1401 1091Q1411 1087 1419 1080L1924 619C1934 610 1937 600 1935 590";
const BLUE_EDGE =
  "M806 925C807 937 811 941 817 947L1122 1184C1140 1196 1155 1197 1170 1197C1188 1197 1204 1193 1219 1186L1403 1101Q1414 1096 1422 1089L1927 627C1939 616 1942 604 1937 592";
const INNER_RIM =
  "M845 886L1711 479C1735 467 1768 467 1787 481L1915 580C1928 590 1926 602 1919 610L1409 1077Q1405 1080 1400 1083L1217 1170C1190 1184 1156 1186 1133 1171L823 927C815 916 819 898 845 886Z";
const FLOOR_EDGE = "M822 925C823 913 831 902 847 895L1713 488C1735 478 1765 477 1787 490L1914 589Q1922 594 1923 603";

const Plate = () => (
  <Scene viewBox="391 233 1637 1078" preserveAspectRatio="xMinYMin meet" role="img" aria-label="自行车挂牌">
    <defs>
      <linearGradient id="cornerFront" x1="1123" x2="1223" y1="0" y2="0" gradientUnits="userSpaceOnUse">
        <stop offset="0" stopColor="#cbcabf" />
        <stop offset=".3" stopColor="#d5d4c8" />
        <stop offset=".7" stopColor="#bdbcb1" />
        <stop offset="1" stopColor="#9c9b93" />
      </linearGradient>
      <linearGradient id="bend" x1="1401" x2="1425" y1="0" y2="0" gradientUnits="userSpaceOnUse">
        <stop offset="0" stopColor="#a3a29a" />
        <stop offset="1" stopColor="#82827b" />
      </linearGradient>
      <linearGradient id="innerWall" x1="845" x2="1787" y1="0" y2="0" gradientUnits="userSpaceOnUse">
        <stop offset="0" stopColor="#b9b8b0" />
        <stop offset=".92" stopColor="#bcbbb3" />
        <stop offset=".96" stopColor="#e9e8de" />
        <stop offset="1" stopColor="#f3f2e6" />
      </linearGradient>
    </defs>
    {/* outer side wall */}
    <path d="M806 918V940C807 952 811 958 818 963L1126 1204L1123 1175L817 937Z" fill="#cdccc1" />
    <path d="M1123 1175L1126 1204C1143 1215 1158 1216 1175 1216C1193 1216 1209 1212 1223 1205L1217 1178Z" fill="url(#cornerFront)" />
    <path d="M1217 1178L1223 1205L1405 1120L1401 1091Z" fill="#9a9991" />
    <path d="M1401 1091L1405 1120Q1417 1114 1425 1106L1419 1080Z" fill="url(#bend)" />
    <path d="M1419 1080L1425 1106L1929 646C1939 638 1942 633 1942 620C1942 606 1939 598 1935 590L1924 619Z" fill="#7d7d75" />
    {/* band between the rim and the blue edge */}
    <path d="M806 918V925C807 937 811 941 817 947L1122 1184C1140 1196 1155 1197 1170 1197C1188 1197 1204 1193 1219 1186L1217 1170L1123 1165L817 930Z" fill="#e7e9e4" />
    <path d="M1217 1170L1219 1186L1403 1101L1401 1085Z" fill="#bebdb4" />
    <path d="M1401 1085L1403 1101Q1414 1096 1422 1089L1927 627C1939 616 1942 604 1937 592L1925 600L1419 1070Z" fill="#a3a29c" />
    {/* top face */}
    <path
      d="M806 918C805 905 811 892 843 877L1710 473C1735 462 1775 462 1795 474L1925 577C1938 588 1940 604 1924 619L1419 1080Q1411 1087 1401 1091L1217 1178C1203 1184 1188 1188 1170 1188C1155 1188 1140 1187 1123 1175L817 937C811 932 807 928 806 918Z"
      fill="#fffff0"
    />
    {/* inner wall, seen on the far sides */}
    <path d="M822 925L823 927C815 916 819 898 845 886L1711 479C1735 467 1768 467 1787 481V490C1765 477 1735 478 1713 488L847 895C831 902 823 913 822 925Z" fill="url(#innerWall)" />
    <path d="M822 926C815 914 820 898 845 886L847 895C831 902 823 913 822 926Z" fill="#96958e" />
    <path d="M1787 481L1915 580C1926 588 1927 598 1923 603Q1922 594 1914 589L1787 490Z" fill="#eaeae1" />
    <g fill="none" stroke="#33332f" strokeWidth="1" shapeRendering="crispEdges">
      <path d={RIM_FRONT} />
      <path d={INNER_RIM} />
      <path d={FLOOR_EDGE} />
      <path d="M845 886L847 895M1711 479L1713 488M1787 481V490M1915 580L1914 589" />
      <path d="M817 937L816 950L818 963M1123 1175L1122 1184L1126 1204M1217 1178L1219 1186L1223 1205" />
      <path d="M1401 1091L1403 1101L1405 1120M1419 1080L1422 1089L1425 1106M1924 619L1927 627L1929 646" />
      <path d={BLUE_EDGE} stroke="#2f5fd0" />
    </g>
  </Scene>
);

export default function App() {
  return (
    <Page>
      <GlobalStyle />
      <SharedGradients />
      <TabBar>
        <TabButton $kind="file">文件</TabButton>
        <TabButton $kind="active">模型</TabButton>
        <TabButton>注释</TabButton>
        <TabButton>工具</TabButton>
        <TabButton>视图</TabButton>
      </TabBar>
      <Ribbon>
        {GROUPS.map((group) => (
          <RibbonGroup key={group.name} group={group} />
        ))}
      </Ribbon>
      <Main>
        <ModelTree />
        <Viewport>
          <Plate />
          <ViewBar>
            {VIEWS.map((view) => (
              <ViewButton key={view.icon} $pressed={view.pressed} aria-label={view.label}>
                <BigIcon name={view.icon} />
                {view.menu && <Corner $size={8} />}
              </ViewButton>
            ))}
          </ViewBar>
        </Viewport>
      </Main>
    </Page>
  );
}
